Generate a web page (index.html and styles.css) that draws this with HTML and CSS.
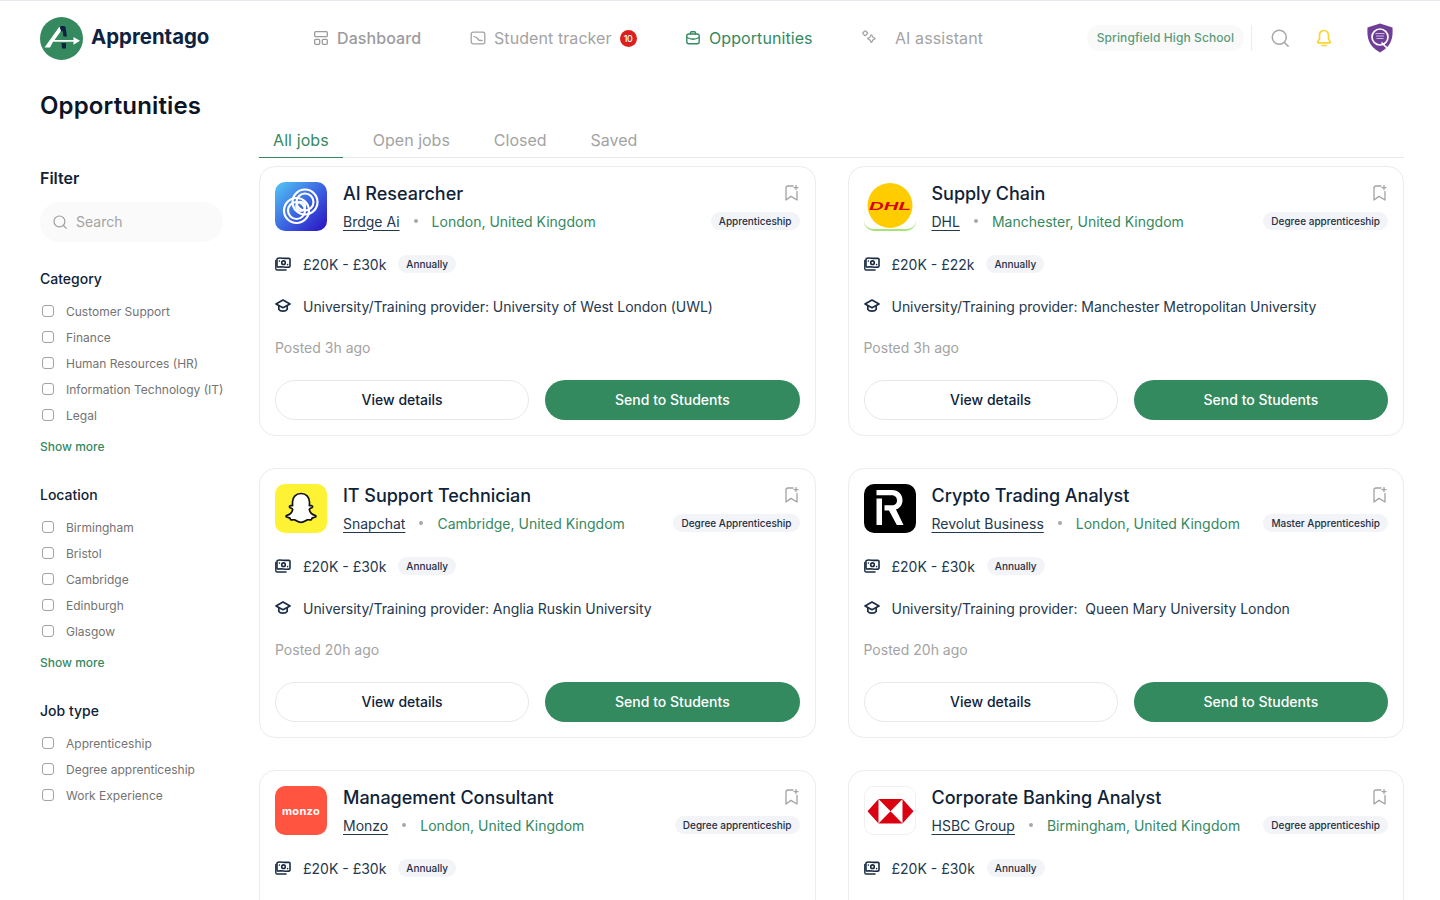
FILE: index.html
```html
<!DOCTYPE html>
<html lang="en">
<head>
<meta charset="utf-8">
<title>Apprentago - Opportunities</title>
<link rel="stylesheet" href="styles.css">
</head>
<body>
<svg class="sprites" width="0" height="0" aria-hidden="true">
  <symbol id="i-bookmark" viewBox="0 0 14 16"><path d="M8 1H3a2 2 0 0 0-2 2v12l5-3.600 6 3.600V6.500M11 .6v4M9 2.600h4" fill="none" stroke="currentColor" stroke-width="1.300" stroke-linecap="round" stroke-linejoin="round"/></symbol>
  <symbol id="i-money" viewBox="0 0 16 14"><g fill="none" stroke="currentColor" stroke-width="1.600" stroke-linejoin="round"><path d="M3 1.200c3-.6 7 .8 10.800 0 .6 0 1.200.4 1.200 1v6.800c0 .6-.4 1-1 1.100-3.600.7-7.800-.8-10.800 0-.7 0-1.200-.5-1.200-1.100V2.200c0-.5.400-1 1-1z"/><circle cx="8.500" cy="5.700" r="1.800"/></g><path d="M.8 3.500v8.200c0 .8.500 1.300 1.300 1.300h9" fill="none" stroke="currentColor" stroke-width="1.400" stroke-linecap="round"/><path d="M4.400 4v.1M12.600 7.500v.1" stroke="currentColor" stroke-width="1.600" stroke-linecap="round"/></symbol>
  <symbol id="i-grad" viewBox="0 0 16 14"><g fill="none" stroke="currentColor" stroke-width="1.700" stroke-linejoin="round" stroke-linecap="round"><path d="M8 1 15 5 8 8.700 1 5z"/><path d="M3.800 6.700v3.700c1.400 2.400 7 2.400 8.400 0V6.700"/></g></symbol>
  <symbol id="i-search" viewBox="0 0 20 20"><g fill="none" stroke="currentColor" stroke-width="1.700" stroke-linecap="round"><circle cx="9.200" cy="9.200" r="7.800"/><path d="m15 15 4 4"/></g></symbol>
</svg>

<div class="page">
  <header class="topbar">
    <a class="brand">
      <svg class="brand-mark" viewBox="0 0 43 43" aria-hidden="true">
        <circle cx="21.500" cy="21.500" r="21.500" fill="#35895f"/>
        <path d="M19 10.500c1-2 5.500-2 6.500-.5l1.500 9.500h-3.500l-.8-5.500-2.500 1z" fill="#0d2340"/>
        <path d="M21.500 26h4.500v5.500h-4z" fill="#0d2340"/>
        <path d="M4.500 30.500 19.500 9.500l1.500 4.500-6.500 9h19v-3l6.500 3.800-6.500 4v-3H13l-3 5.800z" fill="#fff"/>
      </svg>
      <span class="brand-name">Apprentago</span>
    </a>
    <nav class="nav">
      <a class="nav-item nav-dash">
        <svg class="nav-icon" viewBox="0 0 16 16"><g fill="none" stroke="currentColor" stroke-width="1.300"><rect x=".7" y="1.700" width="12.600" height="5" rx="1"/><rect x=".7" y="9.300" width="5" height="5" rx="1"/><rect x="8.300" y="9.300" width="5" height="5" rx="1"/></g></svg>
        <span>Dashboard</span>
      </a>
      <a class="nav-item nav-tracker">
        <svg class="nav-icon" viewBox="0 0 16 16"><g fill="none" stroke="currentColor" stroke-width="1.300" stroke-linejoin="round" stroke-linecap="round"><rect x="1.200" y="2.200" width="13.600" height="11.600" rx="2"/><path d="M3.800 6.500 6.500 7.500l2.500 2.800 3.200.2"/></g></svg>
        <span>Student tracker</span>
        <span class="nav-badge">10</span>
      </a>
      <a class="nav-item nav-opps is-active">
        <svg class="nav-icon" viewBox="0 0 16 16"><g fill="none" stroke="currentColor" stroke-width="1.400" stroke-linejoin="round" stroke-linecap="round"><path d="M5.500 4V2.800c0-.6.400-1 1-1h3c.6 0 1 .4 1 1V4"/><rect x="1.800" y="4" width="12.400" height="9.800" rx="2"/><path d="M2 7.500c3.500 2 8.500 2 12 0M8 8.800v.6"/></g></svg>
        <span>Opportunities</span>
      </a>
      <a class="nav-item nav-ai">
        <svg class="nav-icon" viewBox="0 0 16 16"><g fill="none" stroke="currentColor" stroke-width="1.300" stroke-linejoin="round"><rect x="1.300" y="1.300" width="3.800" height="3.800" rx="1" transform="rotate(45 3.200 3.200)"/><path d="M10 5.600c.4 1.400 1 2 2.400 2.400.9.200.9 1 0 1.200-1.400.4-2 1-2.400 2.400-.2.900-1 .900-1.200 0-.4-1.400-1-2-2.400-2.400-.9-.2-.9-1 0-1.200 1.400-.4 2-1 2.400-2.400.2-.9 1-.9 1.200 0z"/></g></svg>
        <span>AI assistant</span>
      </a>
    </nav>
    <div class="top-actions">
      <span class="school-pill">Springfield High School</span>
      <span class="top-divider"></span>
      <svg class="top-search"><use href="#i-search"/></svg>
      <svg class="top-bell" viewBox="0 0 16 18"><g fill="none" stroke="currentColor" stroke-width="1.700" stroke-linejoin="round" stroke-linecap="round"><path d="M8 1.500c-2.800 0-4.500 2.200-4.500 5v3.300L1.800 13c-.2.400 0 .9.500.9h11.400c.5 0 .7-.5.500-.9l-1.700-3.200V6.500c0-2.800-1.700-5-4.500-5z"/><path d="M6 16.500h4"/></g></svg>
      <svg class="top-crest" viewBox="0 0 26 30" aria-hidden="true">
        <path d="M13 .5 25.500 4.500c.5 9 0 18-12.500 25C.5 22.500 0 13.500.5 4.500z" fill="#6f3f98"/>
        <circle cx="13" cy="14" r="8" fill="none" stroke="#fff" stroke-width="1.700"/>
        <path d="M8.500 10.500h9M9 13h8M9.500 15.500h7" stroke="#cdb9de" stroke-width="1.200"/>
        <path d="m15 20 5 5" stroke="#fff" stroke-width="1.700" stroke-linecap="round"/>
      </svg>
    </div>
  </header>

  <h1 class="page-title">Opportunities</h1>

  <div class="layout">
    <aside class="filters">
      <h2 class="filters-title">Filter</h2>
      <div class="filter-search">
        <svg class="filter-search-icon"><use href="#i-search"/></svg>
        <span class="filter-search-text">Search</span>
      </div>

      <section class="filter-group">
        <h3 class="filter-heading">Category</h3>
        <label class="filter-option"><span class="check"></span>Customer Support</label>
        <label class="filter-option"><span class="check"></span>Finance</label>
        <label class="filter-option"><span class="check"></span>Human Resources (HR)</label>
        <label class="filter-option"><span class="check"></span>Information Technology (IT)</label>
        <label class="filter-option"><span class="check"></span>Legal</label>
        <a class="show-more">Show more</a>
      </section>

      <section class="filter-group">
        <h3 class="filter-heading">Location</h3>
        <label class="filter-option"><span class="check"></span>Birmingham</label>
        <label class="filter-option"><span class="check"></span>Bristol</label>
        <label class="filter-option"><span class="check"></span>Cambridge</label>
        <label class="filter-option"><span class="check"></span>Edinburgh</label>
        <label class="filter-option"><span class="check"></span>Glasgow</label>
        <a class="show-more">Show more</a>
      </section>

      <section class="filter-group">
        <h3 class="filter-heading">Job type</h3>
        <label class="filter-option"><span class="check"></span>Apprenticeship</label>
        <label class="filter-option"><span class="check"></span>Degree apprenticeship</label>
        <label class="filter-option"><span class="check"></span>Work Experience</label>
      </section>
    </aside>

    <main class="content">
      <div class="tabs">
        <a class="tab is-active">All jobs</a>
        <a class="tab">Open jobs</a>
        <a class="tab">Closed</a>
        <a class="tab">Saved</a>
      </div>

      <div class="job-grid">
        <article class="job-card">
          <div class="job-head">
            <div class="logo logo-bridge">
              <svg viewBox="0 0 52 49"><g fill="none" stroke="#fff" stroke-width="2.200"><circle cx="30" cy="20" r="12.500"/><circle cx="30" cy="20" r="8.500"/><circle cx="21.500" cy="28.500" r="12.500"/><circle cx="21.500" cy="28.500" r="8.500"/><circle cx="25.700" cy="24.300" r="4.500"/></g></svg>
            </div>
            <div class="job-info">
              <div class="job-title-row"><h3 class="job-title">AI Researcher</h3><svg class="bookmark"><use href="#i-bookmark"/></svg></div>
              <div class="job-meta"><a class="company">Brdge Ai</a><span class="dot"></span><span class="place">London, United Kingdom</span><span class="tag">Apprenticeship</span></div>
            </div>
          </div>
          <div class="row row-salary"><svg class="row-icon"><use href="#i-money"/></svg><span>£20K - £30k</span><span class="tag">Annually</span></div>
          <div class="row row-provider"><svg class="row-icon"><use href="#i-grad"/></svg><span>University/Training provider: University of West London (UWL)</span></div>
          <p class="posted">Posted 3h ago</p>
          <div class="actions"><button class="btn btn-outline">View details</button><button class="btn btn-solid">Send to Students</button></div>
        </article>

        <article class="job-card">
          <div class="job-head">
            <div class="logo logo-dhl">
              <svg viewBox="0 0 52 49"><circle cx="26" cy="23.500" r="22.500" fill="#ffcc00"/></svg>
              <span class="dhl-word">DHL</span>
            </div>
            <div class="job-info">
              <div class="job-title-row"><h3 class="job-title">Supply Chain</h3><svg class="bookmark"><use href="#i-bookmark"/></svg></div>
              <div class="job-meta"><a class="company">DHL</a><span class="dot"></span><span class="place">Manchester, United Kingdom</span><span class="tag">Degree apprenticeship</span></div>
            </div>
          </div>
          <div class="row row-salary"><svg class="row-icon"><use href="#i-money"/></svg><span>£20K - £22k</span><span class="tag">Annually</span></div>
          <div class="row row-provider"><svg class="row-icon"><use href="#i-grad"/></svg><span>University/Training provider: Manchester Metropolitan University</span></div>
          <p class="posted">Posted 3h ago</p>
          <div class="actions"><button class="btn btn-outline">View details</button><button class="btn btn-solid">Send to Students</button></div>
        </article>

        <article class="job-card">
          <div class="job-head">
            <div class="logo logo-snap">
              <svg viewBox="0 0 52 49"><path d="M26 9.500c5.500 0 8.500 4 8.500 8.500 0 1.500 0 2.800-.1 3.600.8.400 1.900-.2 2.500.1 1 .4.800 1.500-.1 2-1 .5-2.400.8-2.500 1.800.6 3 3 5.200 6.100 6 .8.300.7 1.200 0 1.500-1 .5-2.200.6-3.300 1-.5.500-.2 1.500-.9 1.800-1.100.2-2.500-.3-3.800.100-1.700.4-3 2.500-6.400 2.500s-4.700-2.100-6.400-2.500c-1.300-.4-2.700.1-3.800-.1-.7-.3-.4-1.300-.9-1.800-1.100-.4-2.300-.5-3.300-1-.7-.3-.8-1.200 0-1.500 3.100-.8 5.500-3 6.100-6-.1-1-1.500-1.300-2.500-1.800-.9-.5-1.100-1.600-.1-2 .6-.3 1.700.3 2.500-.1-.1-.8-.1-2.100-.1-3.600 0-4.500 3-8.500 8.500-8.500z" fill="#fff" stroke="#111" stroke-width="1.700" stroke-linejoin="round"/></svg>
            </div>
            <div class="job-info">
              <div class="job-title-row"><h3 class="job-title">IT Support Technician</h3><svg class="bookmark"><use href="#i-bookmark"/></svg></div>
              <div class="job-meta"><a class="company">Snapchat</a><span class="dot"></span><span class="place">Cambridge, United Kingdom</span><span class="tag">Degree Apprenticeship</span></div>
            </div>
          </div>
          <div class="row row-salary"><svg class="row-icon"><use href="#i-money"/></svg><span>£20K - £30k</span><span class="tag">Annually</span></div>
          <div class="row row-provider"><svg class="row-icon"><use href="#i-grad"/></svg><span>University/Training provider: Anglia Ruskin University</span></div>
          <p class="posted">Posted 20h ago</p>
          <div class="actions"><button class="btn btn-outline">View details</button><button class="btn btn-solid">Send to Students</button></div>
        </article>

        <article class="job-card">
          <div class="job-head">
            <div class="logo logo-revolut">
              <svg viewBox="0 0 52 49"><path d="M12.500 14.500H18V41h-5.500zM12.500 6h15.500c6.500 0 10.500 4.500 10.500 10.200 0 4.800-2.800 8-6.500 9.200L39.500 41h-6.700L25 26.500h-4.500v-5.300H28c3.300 0 5-2.200 5-4.800 0-2.700-1.900-5.200-5.200-5.200H12.500z" fill="#fff"/></svg>
            </div>
            <div class="job-info">
              <div class="job-title-row"><h3 class="job-title">Crypto Trading Analyst</h3><svg class="bookmark"><use href="#i-bookmark"/></svg></div>
              <div class="job-meta"><a class="company">Revolut Business</a><span class="dot"></span><span class="place">London, United Kingdom</span><span class="tag">Master Apprenticeship</span></div>
            </div>
          </div>
          <div class="row row-salary"><svg class="row-icon"><use href="#i-money"/></svg><span>£20K - £30k</span><span class="tag">Annually</span></div>
          <div class="row row-provider"><svg class="row-icon"><use href="#i-grad"/></svg><span>University/Training provider:&nbsp; Queen Mary University London</span></div>
          <p class="posted">Posted 20h ago</p>
          <div class="actions"><button class="btn btn-outline">View details</button><button class="btn btn-solid">Send to Students</button></div>
        </article>

        <article class="job-card">
          <div class="job-head">
            <div class="logo logo-monzo"><span>monzo</span></div>
            <div class="job-info">
              <div class="job-title-row"><h3 class="job-title">Management Consultant</h3><svg class="bookmark"><use href="#i-bookmark"/></svg></div>
              <div class="job-meta"><a class="company">Monzo</a><span class="dot"></span><span class="place">London, United Kingdom</span><span class="tag">Degree apprenticeship</span></div>
            </div>
          </div>
          <div class="row row-salary"><svg class="row-icon"><use href="#i-money"/></svg><span>£20K - £30k</span><span class="tag">Annually</span></div>
        </article>

        <article class="job-card">
          <div class="job-head">
            <div class="logo logo-hsbc">
              <svg viewBox="0 0 52 49"><path d="M14.500 13h24v24.500h-24z" fill="#fff"/><path d="M14.500 13h24l-12 12.200zM14.500 37.500h24l-12-12.300zM14.500 13v24.500L3.500 25.200zM38.500 13v24.500l11-12.300z" fill="#db0011"/></svg>
            </div>
            <div class="job-info">
              <div class="job-title-row"><h3 class="job-title">Corporate Banking Analyst</h3><svg class="bookmark"><use href="#i-bookmark"/></svg></div>
              <div class="job-meta"><a class="company">HSBC Group</a><span class="dot"></span><span class="place">Birmingham, United Kingdom</span><span class="tag">Degree apprenticeship</span></div>
            </div>
          </div>
          <div class="row row-salary"><svg class="row-icon"><use href="#i-money"/></svg><span>£20K - £30k</span><span class="tag">Annually</span></div>
        </article>
      </div>
    </main>
  </div>
</div>
</body>
</html>
```

FILE: styles.css
```css
* { box-sizing: border-box; }

html, body {
  margin: 0;
  height: 100%;
  overflow: hidden;
  background: #fff;
}

body {
  font-family: "Inter", "Liberation Sans", sans-serif;
  color: #0f2238;
  border-top: 1px solid #e8e9ee;
}

.sprites { display: block; height: 0; }

h1, h2, h3, p { margin: 0; }

.page { padding: 0 36px 0 40px; }

/* Top bar */
.topbar {
  display: flex;
  align-items: center;
  height: 74px;
}

.brand {
  display: flex;
  align-items: center;
  gap: 8px;
  width: 274px;
}

.brand-mark { width: 43px; height: 43px; flex: none; }

.brand-name {
  margin-top: -4px;
  font-size: 20.400px;
  font-weight: 700;
  color: #0d2340;
}

.nav {
  display: flex;
  align-items: center;
}

.nav-item {
  display: flex;
  align-items: center;
  font-size: 16px;
  letter-spacing: 0.080px;
  color: #a3a3a3;
}

.nav-icon { width: 16px; height: 16px; flex: none; }

.nav-dash { gap: 7px; width: 156px; font-weight: 500; color: #9b9b9b; }
.nav-tracker { gap: 8px; width: 215px; }
.nav-opps { gap: 8px; width: 177px; }
.nav-ai { gap: 17px; }

.nav-item.is-active { color: #35895f; }

.nav-badge {
  display: flex;
  align-items: center;
  justify-content: center;
  width: 17px;
  height: 17px;
  border-radius: 50%;
  background: #dc2020;
  color: #fff;
  font-size: 9px;
  font-weight: 500;
  letter-spacing: -0.300px;
}

.top-actions {
  display: flex;
  align-items: center;
  margin-left: auto;
}

.school-pill {
  padding: 0 10px;
  height: 26px;
  line-height: 26px;
  border-radius: 13px;
  background: #f9f9f9;
  color: #5b9b7b;
  font-size: 12px;
  font-weight: 500;
  letter-spacing: 0.090px;
  white-space: nowrap;
}

.top-divider {
  width: 1px;
  height: 26px;
  margin: 0 19px 0 7px;
  background: #ececec;
}

.top-search { width: 18px; height: 18px; color: #a8a8a8; }

.top-bell { width: 16px; height: 18px; margin-left: 27px; color: #fbd436; }

.top-crest { width: 26px; height: 30px; margin-left: 35px; margin-right: 11px; }

.page-title {
  font-size: 24px;
  font-weight: 600;
  line-height: 29px;
  letter-spacing: 0.150px;
  margin-top: 16px;
  color: #0b1525;
}

/* Layout */
.layout {
  display: grid;
  grid-template-columns: 219px 1145px;
}

/* Filters */
.filters { padding-top: 46px; width: 183px; }

.filters-title {
  font-size: 16px;
  font-weight: 600;
  line-height: 24px;
}

.filter-search {
  display: flex;
  align-items: center;
  gap: 9px;
  height: 40px;
  margin-top: 12px;
  padding-left: 13px;
  border-radius: 20px;
  background: #fafafa;
  color: #a3a3a3;
  font-size: 14px;
}

.filter-search-text { margin-top: -1px; }

.filter-search-icon { width: 14px; height: 14px; color: #9d9d9d; }

.filter-group { margin-top: 27px; }
.filter-group + .filter-group { margin-top: 28px; }

.filter-heading {
  font-size: 14px;
  font-weight: 500;
  line-height: 20px;
  margin-bottom: 9px;
}

.filter-option {
  display: flex;
  align-items: center;
  gap: 12px;
  height: 26px;
  padding-left: 2px;
  font-size: 12px;
  color: #737373;
  white-space: nowrap;
}

.check {
  width: 12px;
  height: 12px;
  border: 1.500px solid #a3a3a3;
  border-radius: 3px;
  flex: none;
}

.show-more {
  display: block;
  margin-top: 9px;
  font-size: 12px;
  font-weight: 500;
  line-height: 20px;
  color: #35895f;
}

/* Tabs */
.tabs {
  display: flex;
  height: 38px;
  border-bottom: 1px solid #e8e8e8;
}

.tab {
  padding: 8px 14px 0;
  margin-right: 16px;
  font-size: 16px;
  line-height: 24px;
  color: #a3a3a3;
}

.tab.is-active {
  height: 38px;
  letter-spacing: 0.100px;
  color: #35895f;
  border-bottom: 1px solid #35895f;
}

/* Cards */
.job-grid {
  display: grid;
  grid-template-columns: 1fr 1fr;
  gap: 32px;
  margin-top: 8px;
}

.job-card {
  height: 270px;
  padding: 15px;
  border: 1px solid #ececec;
  border-radius: 16px;
  background: #fff;
}

.job-head {
  display: flex;
  gap: 16px;
  height: 49px;
}

.logo {
  position: relative;
  width: 52px;
  height: 49px;
  flex: none;
  border-radius: 10px;
  overflow: hidden;
}

.logo svg { display: block; width: 52px; height: 49px; }

.logo-bridge { background: linear-gradient(135deg, #54c8f5 0%, #3a5ee0 55%, #2a0fc0 100%); }
.logo-snap { background: #fdf233; }
.logo-revolut { background: #000; }
.logo-monzo {
  display: flex;
  align-items: center;
  justify-content: center;
  background: #ff5540;
  color: #fff;
  font-size: 11px;
  font-weight: 700;
  letter-spacing: 0.300px;
}
.logo-hsbc { border: 1px solid #f0f0f0; background: #fff; }
.logo-hsbc svg { margin: -1px; }
.logo-dhl { background: #fff; border-bottom: 2px solid #a8e27a; }

.dhl-word {
  position: absolute;
  left: 13px;
  width: 26px;
  top: 16.500px;
  text-align: center;
  font-family: "Liberation Sans", sans-serif;
  font-size: 11px;
  line-height: 14px;
  font-weight: 700;
  font-style: italic;
  white-space: nowrap;
  color: #d40511;
  transform: scaleX(1.850);
}

.job-info { flex: 1; min-width: 0; }

.job-title-row {
  display: flex;
  align-items: center;
  justify-content: space-between;
  height: 24px;
}

.job-title {
  font-size: 18px;
  font-weight: 500;
  line-height: 24px;
  letter-spacing: -0.030px;
  color: #0f2238;
}

.bookmark { width: 14px; height: 16px; margin: -3px 1px 0 0; color: #a3a3a3; }

.job-meta {
  display: flex;
  align-items: center;
  height: 24px;
  margin-top: 3px;
  font-size: 14px;
}

.company {
  color: #24384e;
  text-decoration: underline;
  text-underline-offset: 3px;
}

.dot {
  width: 4px;
  height: 4px;
  margin: 0 14px;
  border-radius: 50%;
  background: #a8a8a8;
}

.place { color: #35895f; }

.tag {
  display: inline-flex;
  align-items: center;
  height: 18px;
  padding: 0 8px;
  border-radius: 9px;
  background: #f2f4f8;
  font-size: 10px;
  font-weight: 500;
  color: #1f2f45;
  white-space: nowrap;
}

.job-meta .tag { margin-left: auto; }

.row {
  display: flex;
  align-items: center;
  height: 24px;
  font-size: 14px;
  color: #24384e;
}

.row-icon { width: 16px; height: 14px; margin-right: 12px; flex: none; color: #1a2c44; }

.row-salary { margin-top: 21px; }
.row-salary .tag { margin-left: 12px; }

.row-provider { margin-top: 18px; letter-spacing: -0.040px; }

.posted {
  margin-top: 20px;
  font-size: 14px;
  line-height: 20px;
  color: #a3a3a3;
}

.actions {
  display: grid;
  grid-template-columns: 1fr 1fr;
  gap: 16px;
  margin-top: 22px;
}

.btn {
  height: 40px;
  padding: 0 0 2px;
  border-radius: 20px;
  font-family: inherit;
  font-size: 14px;
  font-weight: 500;
}

.btn-outline {
  border: 1px solid #e8e8e8;
  background: #fff;
  color: #0f2238;
}

.btn-solid {
  border: 0;
  background: #338a5f;
  color: #fff;
}
```
